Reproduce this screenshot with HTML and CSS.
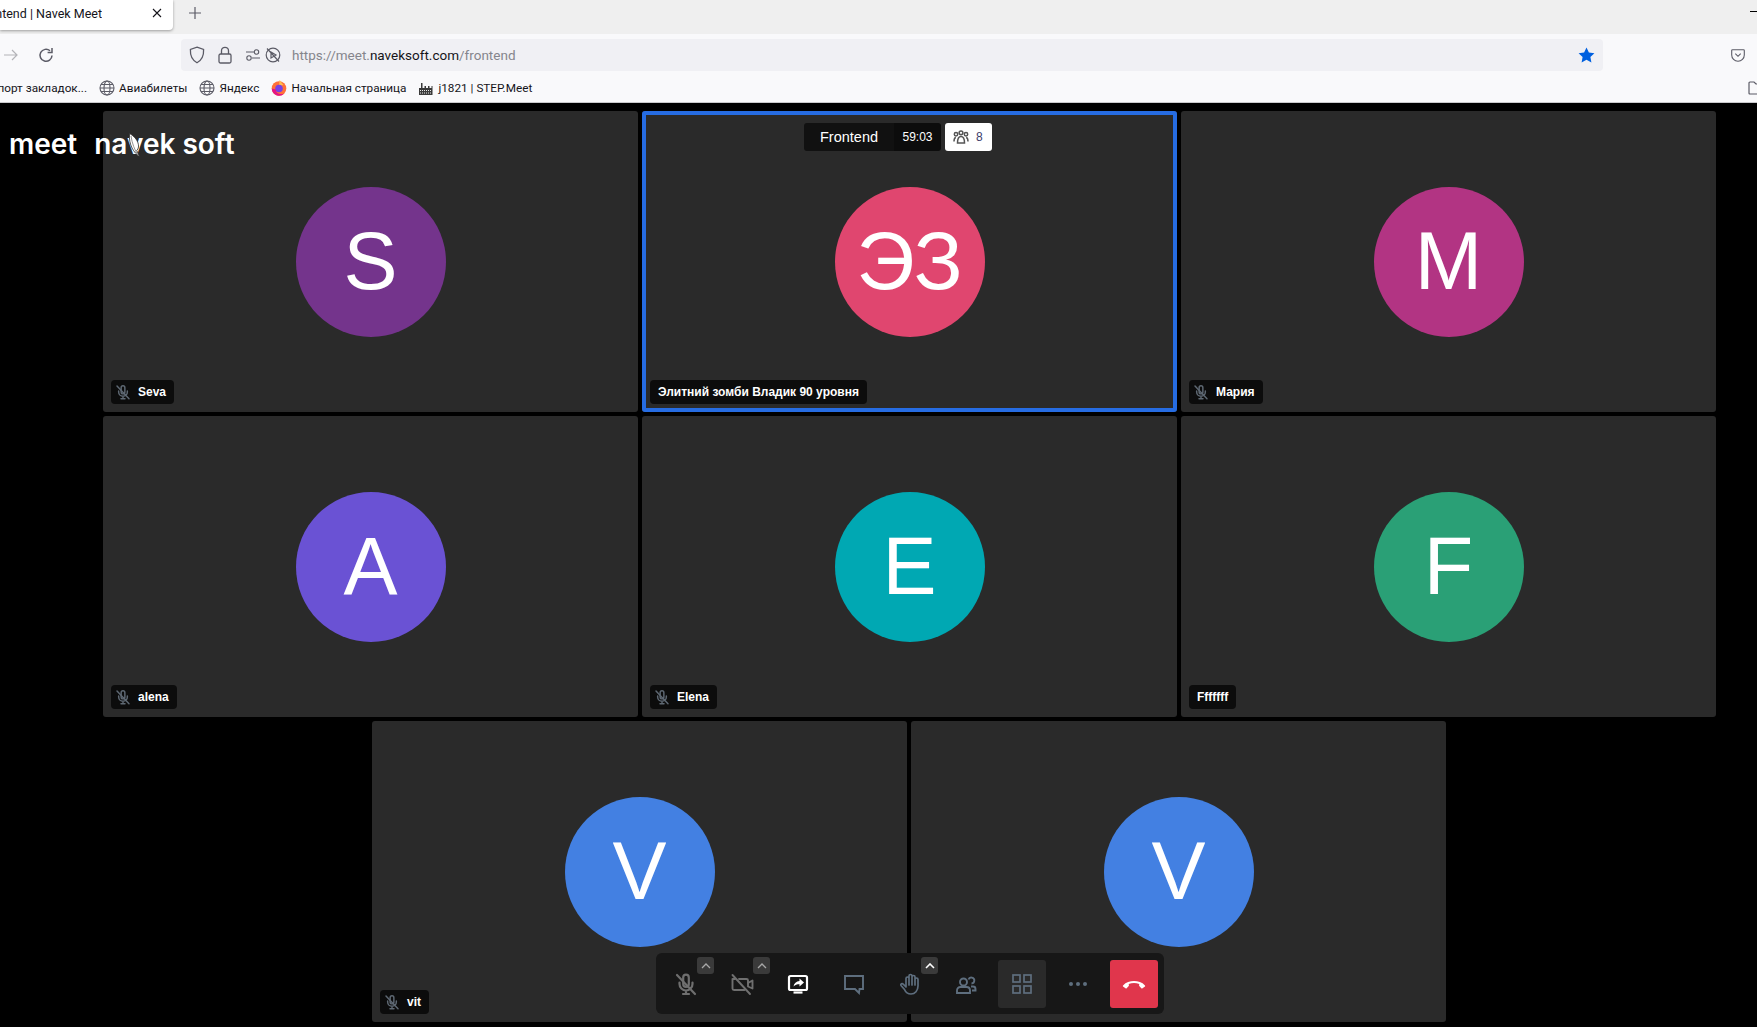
FILE: index.html
```html
<!DOCTYPE html>
<html lang="ru">
<head>
<meta charset="utf-8">
<title>Frontend | Navek Meet</title>
<link rel="stylesheet" href="styles.css">
</head>
<body>
<svg class="defs" width="0" height="0">
  <symbol id="mic-off" viewBox="0 0 24 24"><g fill="none" stroke="currentColor" stroke-width="2.200" stroke-linecap="round"><path d="M9.200 5.500a2.800 2.800 0 0 1 5.600 0v6.500a2.800 2.800 0 0 1-5.600 0z"/><path d="M5.500 10.500v1.500a6.500 6.500 0 0 0 13 0v-1.500M12 18.500V22M9 22h6M3 3l18 19"/></g></symbol>
  <symbol id="globe" viewBox="0 0 16 16"><g fill="none" stroke="#5b5b66" stroke-width="1.100"><circle cx="8" cy="8" r="7"/><ellipse cx="8" cy="8" rx="3" ry="7"/><path d="M1 8h14M2 4.500h12M2 11.500h12"/></g></symbol>
</svg>

<header class="browser">
  <div class="tabstrip">
    <div class="tab">
      <span class="tab-title"><span>Frontend | Navek Meet</span></span>
      <svg class="tab-close" width="10" height="10" viewBox="0 0 10 10"><path d="M1 1l8 8M9 1l-8 8" stroke="#15141a" stroke-width="1.100"/></svg>
    </div>
    <svg class="new-tab" width="14" height="14" viewBox="0 0 14 14"><path d="M7 1v12M1 7h12" stroke="#5b5b66" stroke-width="1.200"/></svg>
    <span class="min-btn"></span>
  </div>
  <div class="navbar">
    <svg class="nav-forward" width="16" height="16" viewBox="0 0 16 16"><path d="M1 8h13M9 3l5 5-5 5" fill="none" stroke="#b4b4b8" stroke-width="1.200"/></svg>
    <svg class="nav-reload" width="16" height="16" viewBox="0 0 16 16"><path d="M14 8.500A6 6 0 1 1 12 3.800M14 1v4.400H9.600" fill="none" stroke="#5b5b66" stroke-width="1.500"/></svg>
    <div class="urlbar">
      <svg class="ic-shield" width="16" height="18" viewBox="0 0 16 18"><path d="M8 1.200 14.600 3.400c.3 5.700-1.300 10.500-6.600 13.400C2.700 13.900 1.100 9.100 1.400 3.400z" fill="none" stroke="#5b5b66" stroke-width="1.300"/></svg>
      <svg class="ic-lock" width="14" height="18" viewBox="0 0 14 18"><path d="M3.500 8V4.800a3.500 3.500 0 0 1 7 0V8" fill="none" stroke="#5b5b66" stroke-width="1.300"/><rect x="1" y="8" width="12" height="9" rx="1.500" fill="none" stroke="#5b5b66" stroke-width="1.300"/></svg>
      <svg class="ic-perm" width="14" height="14" viewBox="0 0 14 14"><g fill="none" stroke="#5b5b66" stroke-width="1.100"><path d="M0 4h8M6 10h8"/><circle cx="10.500" cy="4" r="2.200"/><circle cx="3" cy="10" r="2.200"/></g></svg>
      <svg class="ic-auto" width="16" height="16" viewBox="0 0 16 16"><g fill="none" stroke="#5b5b66" stroke-width="1.200"><circle cx="8" cy="8" r="6.800"/><path d="M6 5l5 3-5 3zM2 1.500l12 13"/></g></svg>
      <span class="url"><span class="url-dim">https://meet.</span>naveksoft.com<span class="url-dim">/frontend</span></span>
      <svg class="ic-star" width="17" height="16" viewBox="0 0 17 16"><path d="M8.500.5l2.400 5 5.500.7-4 3.800 1 5.500-4.900-2.700-4.900 2.700 1-5.500-4-3.800 5.500-.7z" fill="#0060df"/></svg>
    </div>
    <svg class="ic-pocket" width="14" height="13" viewBox="0 0 14 13"><path d="M1.500.7h11c.5 0 .8.300.8.800v4.500a6.300 6.300 0 0 1-12.600 0V1.500c0-.5.300-.8.800-.8zM4.300 4.700 7 7.300l2.700-2.600" fill="none" stroke="#5b5b66" stroke-width="1.100"/></svg>
  </div>
  <nav class="bookmarks">
    <span class="bm bm-import"><span>Импорт закладок...</span></span>
    <span class="bm"><svg class="bm-ic" width="16" height="16"><use href="#globe"/></svg>Авиабилеты</span>
    <span class="bm"><svg class="bm-ic" width="16" height="16"><use href="#globe"/></svg>Яндекс</span>
    <span class="bm"><svg class="bm-ic" width="16" height="16" viewBox="0 0 16 16"><circle cx="8" cy="8.500" r="7.300" fill="#ff7139"/><path d="M8.500 0c2.500 2 2 3.500 4 5L8 6z" fill="#ffbd4f"/><circle cx="8" cy="8.500" r="3.800" fill="#7542e5"/><path d="M.8 8.500a7.300 7.300 0 0 0 12.500 5c-3 1-8.300 1-8.300-4z" fill="#e31587"/></svg>Начальная страница</span>
    <span class="bm"><svg class="bm-ic" width="16" height="16" viewBox="0 0 16 16"><path d="M1 15V8h2V3h1.500v5h2V6h1.500v2h2V6h1.500v2h2V6h1v9z" fill="#3a3a3a"/><path d="M2 10.500h12M2 13h12" stroke="#fff" stroke-width=".9" stroke-dasharray="1 1"/></svg>j1821 | STEP.Meet</span>
    <svg class="ic-folder" width="16" height="14" viewBox="0 0 16 14"><path d="M1 12V2c0-.5.300-1 1-1h4l2 2h7v10H2c-.7 0-1-.400-1-1z" fill="none" stroke="#5b5b66" stroke-width="1.200"/></svg>
  </nav>
</header>

<main class="stage">
  <div class="row">
    <section class="tile">
      <div class="avatar av-purple">S</div>
      <div class="name"><svg class="name-ic"><use href="#mic-off"/></svg>Seva</div>
    </section>
    <section class="tile tile-active">
      <div class="avatar av-rose">ЭЗ</div>
      <div class="name name-plain">Элитний зомби Владик 90 уровня</div>
    </section>
    <section class="tile">
      <div class="avatar av-magenta">M</div>
      <div class="name"><svg class="name-ic"><use href="#mic-off"/></svg>Мария</div>
    </section>
  </div>
  <div class="row">
    <section class="tile">
      <div class="avatar av-violet">A</div>
      <div class="name"><svg class="name-ic"><use href="#mic-off"/></svg>alena</div>
    </section>
    <section class="tile">
      <div class="avatar av-teal">E</div>
      <div class="name"><svg class="name-ic"><use href="#mic-off"/></svg>Elena</div>
    </section>
    <section class="tile">
      <div class="avatar av-green">F</div>
      <div class="name name-plain">Fffffff</div>
    </section>
  </div>
  <div class="row row-last">
    <section class="tile">
      <div class="avatar av-blue">V</div>
      <div class="name"><svg class="name-ic"><use href="#mic-off"/></svg>vit</div>
    </section>
    <section class="tile">
      <div class="avatar av-blue">V</div>
    </section>
  </div>

  <div class="logo">
    <span class="logo-meet">meet</span>
    <span class="logo-navek">navek soft</span>
    <svg class="feather" width="14" height="24" viewBox="0 0 14 24"><path d="M1.500 .5C6 3 11 8 10.500 14c-.2 1.500-.8 2.800-1.800 3.500L11.500 23.500C6 20 .5 12 1.500 .5z" fill="#fff" stroke="#2a2a2a" stroke-width=".8"/><path d="M3 3c1 7 3.500 14 7.500 20" stroke="#777" stroke-width=".8" fill="none"/></svg>
  </div>

  <div class="session">
    <div class="session-info">
      <span class="session-name">Frontend</span>
      <span class="session-time">59:03</span>
    </div>
    <div class="session-count">
      <svg width="16" height="14" viewBox="0 0 16 14"><g fill="none" stroke="#555" stroke-width="1.500"><circle cx="8" cy="2.800" r="1.900"/><circle cx="3" cy="4.300" r="1.700"/><circle cx="13" cy="4.300" r="1.700"/><path d="M4.500 13c0-4.500 1.200-6.500 3.500-6.500s3.500 2 3.500 6.500zM1 11.500c0-2.500.6-3.800 1.800-4.300M15 11.500c0-2.500-.6-3.800-1.800-4.300"/></g></svg>
      <span>8</span>
    </div>
  </div>

  <div class="controls">
    <button class="ctl ctl-off">
      <svg width="24" height="24"><use href="#mic-off"/></svg>
      <span class="caret"><svg width="10" height="6" viewBox="0 0 10 6"><path d="M1 5l4-4 4 4" fill="none" stroke="currentColor" stroke-width="1.300"/></svg></span>
    </button>
    <button class="ctl ctl-off">
      <svg width="24" height="24" viewBox="0 0 24 24"><g fill="none" stroke="currentColor" stroke-width="1.900" stroke-linecap="round" stroke-linejoin="round"><path d="M9 7h7.500A1.500 1.500 0 0 1 18 8.500v5M14.500 18H4a1.500 1.500 0 0 1-1.500-1.500V7h2.500"/><path d="M18 11l4.500-2.500v8L18 14.500M2.500 3l17.500 19"/></g></svg>
      <span class="caret"><svg width="10" height="6" viewBox="0 0 10 6"><path d="M1 5l4-4 4 4" fill="none" stroke="currentColor" stroke-width="1.300"/></svg></span>
    </button>
    <button class="ctl ctl-on">
      <svg width="24" height="24" viewBox="0 0 24 24"><rect x="3" y="4" width="18" height="14" rx="1.500" fill="none" stroke="currentColor" stroke-width="2.200"/><path d="M7.500 20.500h9" stroke="currentColor" stroke-width="2.200"/><path d="M13.500 6.500l4.500 4-4.500 4v-2.300c-2.500 0-4.500.600-6 2.300.5-3.200 2.800-5 6-5.500z" fill="currentColor"/></svg>
    </button>
    <button class="ctl">
      <svg width="24" height="24" viewBox="0 0 24 24"><path d="M3 4h18v13h-3.500l-.5 4-4-4H3z" fill="none" stroke="currentColor" stroke-width="1.900" stroke-linejoin="miter"/></svg>
    </button>
    <button class="ctl">
      <svg width="24" height="24" viewBox="0 0 24 24"><path d="M8 13.500V6.500a1.500 1.500 0 0 1 3 0V4a1.500 1.500 0 0 1 3 0v1a1.500 1.500 0 0 1 3 0v2.500a1.500 1.500 0 0 1 3 0V14c0 4.500-3 8-7 8-3.500 0-5.500-2-6.500-4.500L3 13.500c-.8-1.500 1.200-2.600 2.200-1.300L8 15zM11 6v7M14 4v9M17 5.500V13" fill="none" stroke="currentColor" stroke-width="1.700" stroke-linecap="round" stroke-linejoin="round"/></svg>
      <span class="caret caret-on"><svg width="10" height="6" viewBox="0 0 10 6"><path d="M1 5l4-4 4 4" fill="none" stroke="currentColor" stroke-width="1.600"/></svg></span>
    </button>
    <button class="ctl">
      <svg width="24" height="24" viewBox="0 0 24 24"><g fill="none" stroke="currentColor" stroke-width="1.900"><circle cx="9.500" cy="10" r="3.500"/><path d="M3 21v-2.500c0-2 1.500-3.500 3.500-3.500h6c2 0 3.500 1.500 3.500 3.500V21z"/><path d="M14.500 7.500a3 3 0 1 1 3 4M17 14.500h2c1.500 0 2.500 1 2.500 2.500v1.500H18"/></g></svg>
    </button>
    <button class="ctl ctl-grid">
      <svg width="24" height="24" viewBox="0 0 24 24"><g fill="none" stroke="currentColor" stroke-width="1.700"><rect x="3" y="3" width="7" height="7"/><rect x="14" y="3" width="7" height="7"/><rect x="3" y="14" width="7" height="7"/><rect x="14" y="14" width="7" height="7"/></g></svg>
    </button>
    <button class="ctl">
      <svg width="24" height="24" viewBox="0 0 24 24"><g fill="currentColor"><circle cx="5" cy="12" r="2"/><circle cx="12" cy="12" r="2"/><circle cx="19" cy="12" r="2"/></g></svg>
    </button>
    <button class="ctl ctl-end">
      <svg width="24" height="24" viewBox="0 0 24 24"><path d="M1 13.500C4 10 8 9 12 9s8 1 11 4.500c.3.400.2.800 0 1l-2.500 1.800c-.4.300-.9.200-1.200-.1l-2-2.200c-.2-.3-.3-.6-.2-1l.2-1C15.500 11.400 13.800 11 12 11s-3.500.4-5.300 1l.2 1c.1.400 0 .7-.2 1l-2 2.200c-.3.300-.8.400-1.200.1L1 14.500c-.2-.2-.3-.6 0-1z" fill="#fff"/></svg>
    </button>
  </div>
</main>
</body>
</html>
```
FILE: styles.css
```css
* { box-sizing: border-box; }
html, body { margin: 0; height: 100%; }
body {
  width: 1757px;
  height: 1027px;
  overflow: hidden;
  background: #000;
  display: flex;
  flex-direction: column;
  font-family: "Liberation Sans", Arial, sans-serif;
}
.defs { position: absolute; }

/* browser chrome */
.browser {
  height: 103px;
  flex: none;
  background: #f9f9fb;
  border-bottom: 1px solid #c9c9cc;
  font-family: Roboto, "Noto Sans", sans-serif;
  color: #15141a;
}
.tabstrip {
  height: 34px;
  background: #efefef;
  display: flex;
  align-items: flex-start;
}
.tab {
  width: 173px;
  height: 30px;
  padding-bottom: 4px;
  background: #fff;
  border-radius: 0 0 4px 0;
  box-shadow: 0 1px 3px rgba(0, 0, 0, .35);
  display: flex;
  align-items: center;
  font-size: 12.500px;
}
.tab-title {
  width: 102px;
  flex: none;
  display: flex;
  justify-content: flex-end;
  overflow: hidden;
  white-space: nowrap;
}
.tab-close { margin-left: 50px; }
.new-tab { margin: 6px 0 0 15px; }
.min-btn {
  margin: 11px 0 0 auto;
  width: 7px;
  height: 1px;
  background: #000;
}
.navbar {
  height: 38px;
  display: flex;
  align-items: center;
  padding-top: 4px;
}
.nav-forward { margin-left: 3px; }
.nav-reload { margin-left: 19px; }
.urlbar {
  margin-left: 127px;
  width: 1422px;
  height: 32px;
  background: #f0f0f4;
  border-radius: 4px;
  display: flex;
  align-items: center;
  padding-left: 8px;
  font-size: 13.500px;
}
.ic-lock { margin-left: 13px; }
.ic-perm { margin-left: 14px; }
.ic-auto { margin-left: 5px; }
.url { margin-left: 11px; color: #15141a; white-space: nowrap; }
.url-dim { color: #85858c; }
.ic-star { margin-left: auto; margin-right: 8px; }
.ic-pocket { margin-left: 128px; }
.bookmarks {
  height: 30px;
  padding-top: 2px;
  display: flex;
  align-items: center;
  font-size: 11.750px;
  white-space: nowrap;
}
.bm { display: flex; align-items: center; margin-right: 12px; }
.bm-import {
  width: 87px;
  margin-right: 12px;
  justify-content: flex-end;
  overflow: hidden;
}
.bm-ic { margin-right: 4px; flex: none; }
.ic-folder { margin-left: auto; margin-right: -7px; }

/* conference stage */
.stage {
  position: relative;
  flex: 1;
  display: flex;
  flex-direction: column;
  gap: 4px;
  padding: 8px 41px 0 103px;
}
.row {
  display: flex;
  justify-content: center;
  gap: 4px;
}
.row-last { padding-right: 1px; }
.tile {
  position: relative;
  flex: 0 0 535px;
  height: 301px;
  background: #2a2a2a;
  border-radius: 3px;
  display: flex;
  align-items: center;
  justify-content: center;
}
.tile-active::after {
  content: "";
  position: absolute;
  inset: 0;
  border: 4px solid #266ce2;
  border-radius: 3px;
}
.avatar {
  width: 150px;
  height: 150px;
  border-radius: 50%;
  color: #fff;
  font-size: 81px;
  display: flex;
  align-items: center;
  justify-content: center;
}
.av-purple { background: #74348c; }
.av-rose { background: #e0466f; }
.av-magenta { background: #b23483; }
.av-violet { background: #6a52d4; }
.av-teal { background: #00a8b3; }
.av-green { background: #2aa076; }
.av-blue { background: #4380e2; }

.name {
  position: absolute;
  left: 8px;
  bottom: 8px;
  height: 24px;
  padding: 0 8px 0 4px;
  background: #0c0c0c;
  border-radius: 4px;
  display: flex;
  align-items: center;
  gap: 7px;
  color: #fff;
  font-size: 12px;
  font-weight: 700;
  white-space: nowrap;
  z-index: 1;
}
.name-plain { padding-left: 8px; }
.name-ic { width: 16px; height: 16px; color: #5e6873; }

.logo {
  position: absolute;
  left: 9px;
  top: 23px;
  color: #fff;
  font-family: Inter, sans-serif;
  font-weight: 600;
  font-size: 28px;
  line-height: 36px;
  display: flex;
  gap: 17px;
  white-space: nowrap;
}
.feather { position: absolute; left: 119px; top: 7px; }

.session {
  position: absolute;
  left: 804px;
  top: 20px;
  display: flex;
  gap: 4px;
  height: 28px;
}
.session-info {
  display: flex;
  border-radius: 3px;
  overflow: hidden;
  color: #fff;
}
.session-name {
  width: 90px;
  background: #111;
  font-size: 14.500px;
  display: flex;
  align-items: center;
  justify-content: center;
}
.session-time {
  width: 47px;
  background: #0c0c0c;
  font-size: 12px;
  display: flex;
  align-items: center;
  justify-content: center;
}
.session-count {
  width: 47px;
  background: #fff;
  border-radius: 3px;
  display: flex;
  align-items: center;
  gap: 7px;
  padding-left: 8px;
  color: #3c3c6a;
  font-size: 12px;
}

.controls {
  position: absolute;
  left: 656px;
  bottom: 13px;
  width: 508px;
  height: 61px;
  padding: 7px 6px 6px;
  display: flex;
  gap: 8px;
  background: #171717;
  border-radius: 6px;
}
.ctl {
  position: relative;
  width: 48px;
  height: 48px;
  padding: 0;
  border: 0;
  border-radius: 3px;
  background: transparent;
  color: #5e6e7e;
  display: flex;
  align-items: center;
  justify-content: center;
}
.ctl-off { color: #6f6f6f; }
.ctl-on { color: #fff; }
.ctl-grid { background: #2a2a2a; }
.ctl-end { background: #e0364c; }
.caret {
  position: absolute;
  left: 35px;
  top: -3px;
  width: 17px;
  height: 17px;
  background: #3a3a3a;
  border-radius: 3px;
  color: #a8a8a8;
  display: flex;
  align-items: center;
  justify-content: center;
}
.caret-on { color: #fff; }
```
